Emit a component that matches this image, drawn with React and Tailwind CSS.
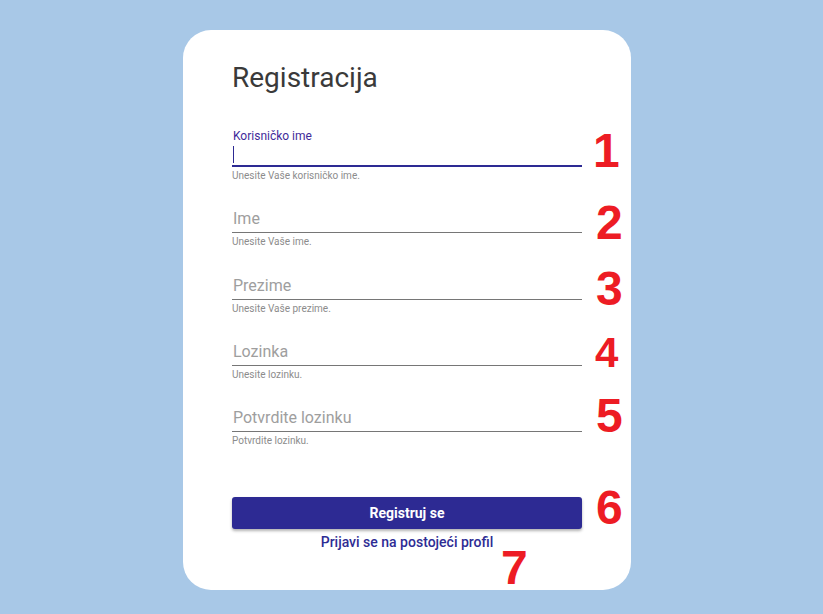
import React from 'react';

const Helper = ({ children }) => (
  <p className="mt-[2px] text-[10px] leading-[14px] text-[#8c8c8c]">{children}</p>
);

const Field = ({ placeholder, helper }) => (
  <div className="flex flex-col">
    <div className="h-[26px] border-b border-[#767676] text-[16px] leading-[24px] text-[#9e9e9e] pl-[1px]">
      {placeholder}
    </div>
    <Helper>{helper}</Helper>
  </div>
);

const Num = ({ children, className }) => (
  <span
    className={`absolute font-bold leading-none text-[#ed1c24] ${className}`}
    style={{ fontFamily: '"Liberation Sans", Arial, sans-serif' }}
  >
    {children}
  </span>
);

export default function App() {
  return (
    <div
      className="h-[614px] bg-[#a8c8e7] pt-[30px] overflow-hidden"
      style={{ fontFamily: 'Roboto, "Liberation Sans", sans-serif' }}
    >
      <div className="relative ml-[183px] w-[448px] h-[560px] rounded-[28px] bg-white pt-[31px] px-[49px] flex flex-col">
        <h1 className="text-[28px] leading-[33px] text-[#3a3a3a]">Registracija</h1>

        <div className="mt-[35px] flex flex-col gap-[24.3px]">
          {/* active field */}
          <div className="flex flex-col">
            <label className="block text-[12px] leading-[14px] text-[#3f2b9a] pl-[1px]">Korisničko ime</label>
            <div className="h-[24px] border-b-2 border-[#2d2a93] flex items-center pl-[1px]">
              <span className="block w-[1px] h-[17px] bg-[#2d2a93]" />
            </div>
            <Helper>Unesite Vaše korisničko ime.</Helper>
          </div>

          <Field placeholder="Ime" helper="Unesite Vaše ime." />
          <Field placeholder="Prezime" helper="Unesite Vaše prezime." />
          <Field placeholder="Lozinka" helper="Unesite lozinku." />
          <Field placeholder="Potvrdite lozinku" helper="Potvrdite lozinku." />
        </div>

        <div className="mt-[49px] flex flex-col gap-[3px]">
          <button className="h-[32px] rounded-[3px] bg-[#2d2a93] text-white text-[14px] font-bold shadow-[0_2px_3px_rgba(0,0,0,0.3)]">
            Registruj se
          </button>
          <a className="text-center text-[14px] leading-[20px] font-medium text-[#2e2c94]">
            Prijavi se na postojeći profil
          </a>
        </div>

        <Num className="text-[48px] left-[410px] top-[97px]">1</Num>
        <Num className="text-[48px] left-[413px] top-[169px]">2</Num>
        <Num className="text-[48px] left-[413px] top-[235px]">3</Num>
        <Num className="text-[42px] left-[412px] top-[302px]">4</Num>
        <Num className="text-[48px] left-[413px] top-[362px]">5</Num>
        <Num className="text-[48px] left-[413px] top-[454px]">6</Num>
        <Num className="text-[48px] left-[318px] top-[514px]">7</Num>
      </div>
    </div>
  );
}
